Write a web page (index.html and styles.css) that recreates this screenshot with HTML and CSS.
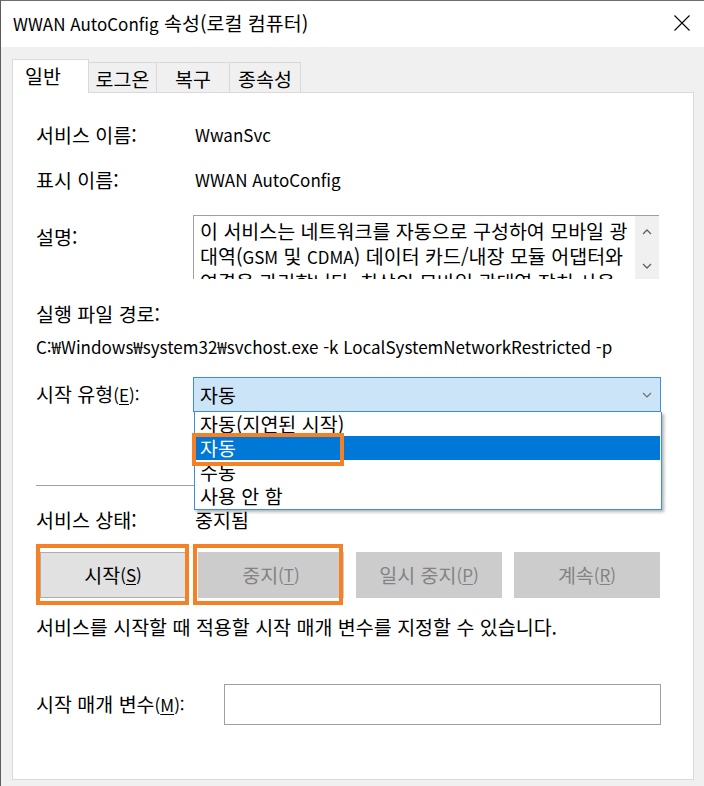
FILE: index.html
```html
<!DOCTYPE html>
<html lang="ko">
<head>
<meta charset="utf-8">
<link rel="stylesheet" href="styles.css">
</head>
<body>
<div class="window">
  <div class="titlebar">
    <span class="title"><span class="lat">WWAN AutoConfig</span> 속성(로컬 컴퓨터)</span>
    <svg class="close" width="16" height="16" viewBox="0 0 16 16"><path d="M0.5 0.5L15.5 15.5M15.5 0.5L0.5 15.5" stroke="#000" stroke-width="1.1"/></svg>
  </div>
  <div class="client">
    <div class="tabs">
      <div class="tab active">일반</div>
      <div class="tab">로그온</div>
      <div class="tab">복구</div>
      <div class="tab">종속성</div>
    </div>
    <div class="panel">
      <div class="row r-name"><span class="label">서비스 이름:</span><span class="value lat">WwanSvc</span></div>
      <div class="row r-disp"><span class="label">표시 이름:</span><span class="value lat">WWAN AutoConfig</span></div>
      <div class="row r-desc">
        <span class="label desc-label">설명:</span>
        <div class="descbox">
          <div class="desctext">이 서비스는 네트워크를 자동으로 구성하여 모바일 광대역(<span class="lat">GSM</span> 및 <span class="lat">CDMA</span>) 데이터 카드/내장 모듈 어댑터와 연결을 관리합니다. 최상의 모바일 광대역 장치 사용 환경을 위해 이 서비스를 실행해 두는 것이 좋습니다.</div>
          <div class="scroll">
            <svg width="12" height="8" viewBox="0 0 12 8"><path d="M2 6L6 2L10 6" fill="none" stroke="#606060" stroke-width="1.3"/></svg>
            <svg width="12" height="8" viewBox="0 0 12 8"><path d="M2 2L6 6L10 2" fill="none" stroke="#606060" stroke-width="1.3"/></svg>
          </div>
        </div>
      </div>
      <div class="row r-pathlabel"><span class="label">실행 파일 경로:</span></div>
      <div class="row r-path lat">C:₩Windows₩system32₩svchost.exe -k LocalSystemNetworkRestricted -p</div>
      <div class="row r-start">
        <span class="label">시작 유형<span class="lat">(<u>E</u>):</span></span>
        <div class="combo"><span>자동</span>
          <svg width="12" height="8" viewBox="0 0 12 8"><path d="M2 2L6 6L10 2" fill="none" stroke="#707070" stroke-width="1.2"/></svg>
        </div>
      </div>
      <div class="sep"></div>
      <div class="row r-status"><span class="label">서비스 상태:</span><span class="value">중지됨</span></div>
      <div class="buttons">
        <div class="btn">시작<span class="lat">(<u>S</u>)</span></div>
        <div class="btn disabled">중지<span class="lat">(<u>T</u>)</span></div>
        <div class="btn disabled">일시 중지<span class="lat">(<u>P</u>)</span></div>
        <div class="btn disabled">계속<span class="lat">(<u>R</u>)</span></div>
      </div>
      <div class="row r-note">서비스를 시작할 때 적용할 시작 매개 변수를 지정할 수 있습니다.</div>
      <div class="row r-param"><span class="label">시작 매개 변수<span class="lat">(<u>M</u>):</span></span><div class="input"></div></div>

      <div class="dropdown">
        <div class="opt">자동(지연된 시작)</div>
        <div class="opt sel">자동</div>
        <div class="opt">수동</div>
        <div class="opt">사용 안 함</div>
      </div>
      <div class="mark m-auto"></div>
      <div class="mark m-start"></div>
      <div class="mark m-stop"></div>
    </div>
  </div>
</div>
</body>
</html>
```

FILE: styles.css
```css
html, body {
  margin: 0;
  padding: 0;
}
body {
  width: 704px;
  height: 786px;
  overflow: hidden;
  background: #f0f0f0;
  font-family: "Noto Sans CJK KR", "Noto Sans", sans-serif;
  font-size: 19.5px;
  color: #000;
}
.lat { font-size: 17px; }
u { text-decoration: underline; text-underline-offset: 2px; text-decoration-thickness: 1px; }
.window {
  width: 704px;
  height: 786px;
  box-sizing: border-box;
  border-top: 1px solid #6e6e6e;
  border-left: 1px solid #5c5c5c;
  display: flex;
  flex-direction: column;
}
.titlebar {
  height: 46px;
  background: #fff;
  display: flex;
  align-items: center;
  justify-content: space-between;
  padding: 0 14px 0 12px;
  flex: none;
}
.title {
  line-height: 22px;
  margin-top: -1px;
}
.close { display: block; margin-top: -2px; }
.client {
  flex: 1;
  padding: 12px 10px 0 11px;
  display: flex;
  flex-direction: column;
}
.tabs {
  display: flex;
  align-items: flex-end;
  height: 33px;
  position: relative;
  z-index: 1;
}
.tab {
  box-sizing: border-box;
  height: 30px;
  border: 1px solid #d9d9d9;
  border-bottom: none;
  border-left: none;
  background: #f0f0f0;
  display: flex;
  align-items: center;
  justify-content: center;
  line-height: 22px;
  padding-top: 2px;
}
.tab:nth-child(2) { width: 68px; }
.tab:nth-child(3) { width: 73px; }
.tab:nth-child(4) { width: 71px; }
.tab.active {
  width: 77px;
  height: 34px;
  background: #fff;
  border-left: 1px solid #d9d9d9;
  margin-bottom: -1px;
  justify-content: flex-start;
  padding-left: 12px;
  padding-top: 0;
  padding-bottom: 2px;
}
.panel {
  position: relative;
  height: 688px;
  box-sizing: border-box;
  background: #fff;
  border: 1px solid #d9d9d9;
  padding: 0 0 0 23px;
}
.row {
  display: flex;
  align-items: center;
  line-height: 22px;
}
.label { width: 159px; flex: none; }
.r-name { margin-top: 31px; height: 22px; }
.r-disp { margin-top: 23px; height: 22px; }
.r-desc { margin-top: 24px; align-items: flex-start; }
.desc-label { margin-top: 11px; }
.descbox {
  width: 466px;
  height: 64px;
  box-sizing: border-box;
  border-top: 1px solid #a0a0a0;
  border-left: 1px solid #a0a0a0;
  display: flex;
  overflow: hidden;
  margin-left: -2px;
}
.desctext {
  flex: 1;
  padding: 2px 4px 0 6px;
  line-height: 25px;
}
.scroll {
  width: 24px;
  flex: none;
  background: #f0f0f0;
  display: flex;
  flex-direction: column;
  align-items: center;
  justify-content: space-between;
  padding: 12px 0 9px;
  box-sizing: border-box;
}
.scroll svg { display: block; }
.r-pathlabel { margin-top: 24px; height: 22px; }
.r-path { margin-top: 11px; height: 22px; }
.r-start { margin-top: 19px; }
.combo {
  width: 468px;
  height: 35px;
  box-sizing: border-box;
  margin-left: -2px;
  border: 1px solid #3b8ee0;
  background: #cce4f7;
  display: flex;
  align-items: center;
  justify-content: space-between;
  padding: 0 7px 0 6px;
}
.combo svg { display: block; }
.sep {
  margin-top: 73px;
  width: 624px;
  height: 1px;
  background: #a0a0a0;
  border-bottom: 1px solid #fff;
}
.r-status { margin-top: 22px; height: 22px; }
.buttons {
  margin-top: 21px;
  width: 620px;
  display: flex;
  justify-content: space-between;
  margin-left: 4px;
}
.btn {
  width: 146px;
  height: 46px;
  box-sizing: border-box;
  border: 1px solid #adadad;
  background: #e1e1e1;
  display: flex;
  align-items: center;
  justify-content: center;
  line-height: 22px;
}
.btn.disabled {
  background: #cccccc;
  border-color: #cccccc;
  color: #838383;
}
.r-note { margin-top: 18px; height: 22px; }
.r-param { margin-top: 46px; }
.input {
  width: 437px;
  height: 41px;
  box-sizing: border-box;
  border: 1px solid #a0a0a0;
  margin-left: 29px;
}
.dropdown {
  position: absolute;
  left: 181px;
  top: 319px;
  width: 468px;
  height: 98px;
  box-sizing: border-box;
  background: #fff;
  border: 1px solid #3b8ee0;
  border-top: none;
  box-shadow: 2px 2px 3px rgba(0,0,0,0.3);
  padding: 0 1px;
}
.opt {
  height: 24px;
  line-height: 24px;
  padding-left: 4px;
}
.opt.sel { background: #0078d7; color: #fff; }
.mark {
  position: absolute;
  border: 4px solid #f58025;
  box-sizing: border-box;
}
.m-auto { left: 179px; top: 340px; width: 152px; height: 33px; }
.m-start { left: 23px; top: 451px; width: 153px; height: 61px; }
.m-stop { left: 180px; top: 451px; width: 150px; height: 61px; }
```
